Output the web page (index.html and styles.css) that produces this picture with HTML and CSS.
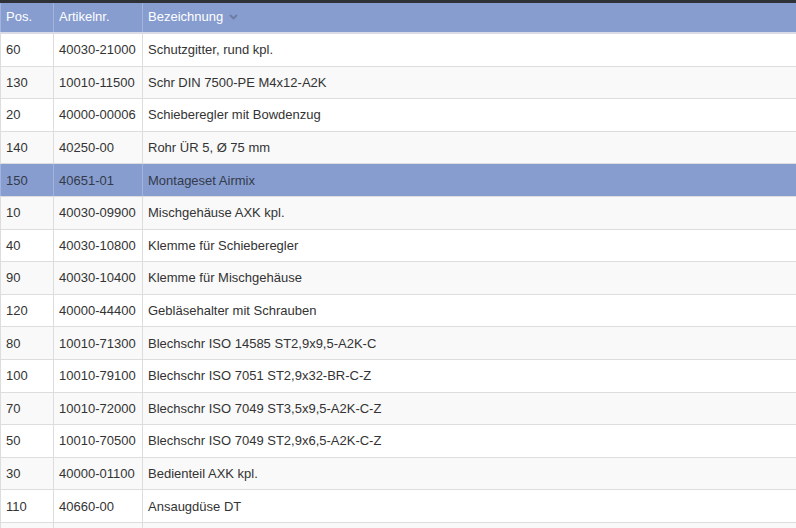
FILE: index.html
```html
<!DOCTYPE html>
<html lang="de">
<head>
<meta charset="utf-8">
<title>Stückliste</title>
<link rel="stylesheet" href="styles.css">
</head>
<body>
<div class="topbar"></div>
<div class="grid">
  <div class="row head">
    <div class="cell">Pos.</div>
    <div class="cell">Artikelnr.</div>
    <div class="cell">Bezeichnung <svg class="sort" width="9" height="6" viewBox="0 0 9 6"><polyline points="1,1 4.5,4.5 8,1" fill="none" stroke="#6e7b9e" stroke-width="1.8"/></svg></div>
  </div>
  <div class="row"><div class="cell">60</div><div class="cell">40030-21000</div><div class="cell">Schutzgitter, rund kpl.</div></div>
  <div class="row"><div class="cell">130</div><div class="cell">10010-11500</div><div class="cell">Schr DIN 7500-PE M4x12-A2K</div></div>
  <div class="row"><div class="cell">20</div><div class="cell">40000-00006</div><div class="cell">Schieberegler mit Bowdenzug</div></div>
  <div class="row"><div class="cell">140</div><div class="cell">40250-00</div><div class="cell">Rohr ÜR 5, Ø 75 mm</div></div>
  <div class="row selected"><div class="cell">150</div><div class="cell">40651-01</div><div class="cell">Montageset Airmix</div></div>
  <div class="row"><div class="cell">10</div><div class="cell">40030-09900</div><div class="cell">Mischgehäuse AXK kpl.</div></div>
  <div class="row"><div class="cell">40</div><div class="cell">40030-10800</div><div class="cell">Klemme für Schieberegler</div></div>
  <div class="row"><div class="cell">90</div><div class="cell">40030-10400</div><div class="cell">Klemme für Mischgehäuse</div></div>
  <div class="row"><div class="cell">120</div><div class="cell">40000-44400</div><div class="cell">Gebläsehalter mit Schrauben</div></div>
  <div class="row"><div class="cell">80</div><div class="cell">10010-71300</div><div class="cell">Blechschr ISO 14585 ST2,9x9,5-A2K-C</div></div>
  <div class="row"><div class="cell">100</div><div class="cell">10010-79100</div><div class="cell">Blechschr ISO 7051 ST2,9x32-BR-C-Z</div></div>
  <div class="row"><div class="cell">70</div><div class="cell">10010-72000</div><div class="cell">Blechschr ISO 7049 ST3,5x9,5-A2K-C-Z</div></div>
  <div class="row"><div class="cell">50</div><div class="cell">10010-70500</div><div class="cell">Blechschr ISO 7049 ST2,9x6,5-A2K-C-Z</div></div>
  <div class="row"><div class="cell">30</div><div class="cell">40000-01100</div><div class="cell">Bedienteil AXK kpl.</div></div>
  <div class="row"><div class="cell">110</div><div class="cell">40660-00</div><div class="cell">Ansaugdüse DT</div></div>
  <div class="row filler"><div class="cell"></div><div class="cell"></div><div class="cell"></div></div>
</div>
</body>
</html>
```
FILE: styles.css
```css
html, body {
  margin: 0;
  padding: 0;
  background: #ffffff;
  font-family: "Liberation Sans", Arial, sans-serif;
  font-size: 13px;
  color: #333333;
  overflow: hidden;
}
.topbar {
  height: 3px;
  background: #2e3237;
}
.grid {
  display: flex;
  flex-direction: column;
}
.row {
  display: grid;
  grid-template-columns: 53px 89px 1fr;
  height: 32.6px;
  box-sizing: border-box;
  border-bottom: 1px solid #dddddd;
  background: #ffffff;
}
.row:nth-child(odd) {
  background: #f9f9f9;
}
.cell {
  display: flex;
  align-items: center;
  padding: 0 5px;
  border-left: 1px solid #dddddd;
  white-space: nowrap;
  overflow: hidden;
}
.row.head {
  height: 31px;
  background: #879dcf;
  color: #ffffff;
  border-bottom: 2px solid #d9dce6;
}
.row.head .cell {
  border-left-color: #a3b3dc;
  padding-bottom: 2px;
}
.sort {
  margin-left: 6px;
  margin-top: 1px;
}
.row.selected {
  background: #879dcf;
  color: #333a4a;
}
.row.selected .cell {
  border-left-color: #a3b3dc;
}
.row.filler {
  height: 5px;
  border-bottom: 0;
  background: #f9f9f9;
}
```
